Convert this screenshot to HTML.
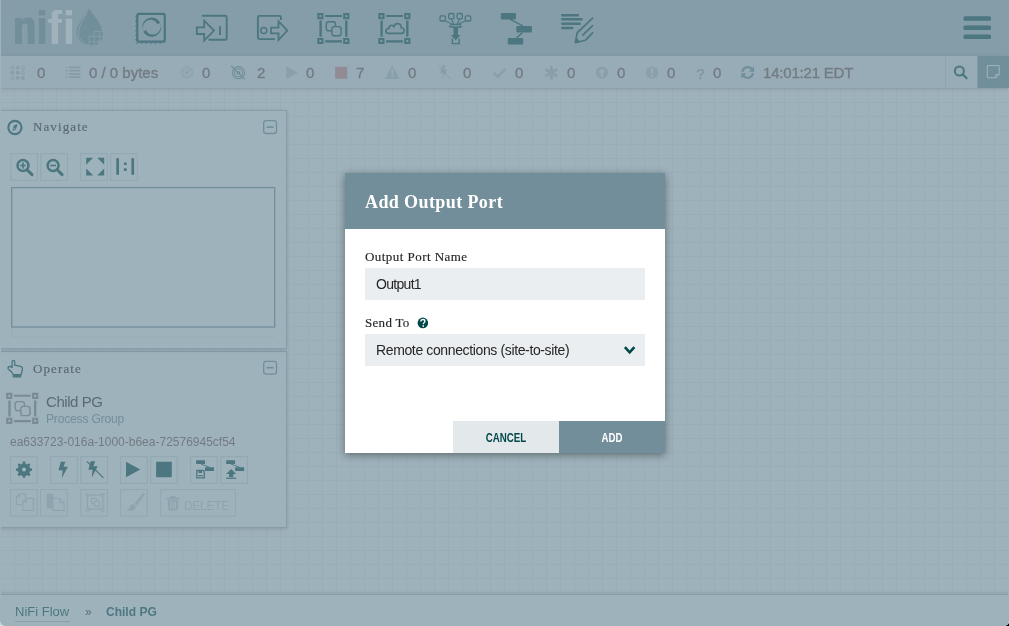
<!DOCTYPE html>
<html><head><meta charset="utf-8">
<style>
*{box-sizing:border-box;margin:0;padding:0}
html,body{width:1009px;height:626px;overflow:hidden;background:linear-gradient(to right,#d6d6d6 50%,#000 50%)}
body{position:relative;font-family:"Liberation Sans",sans-serif}
.abs{position:absolute}
#app{will-change:transform;position:absolute;left:0;top:0;width:1009px;height:626px;overflow:hidden;background-color:#f9fafb;
 background-image:linear-gradient(to right,#e8ecef 1px,transparent 1px),linear-gradient(to bottom,#e8ecef 1px,transparent 1px);
 background-size:14px 14px;background-position:0 4px;border-radius:0 0 5px 5px}
#header{left:0;top:0;width:1009px;height:56px;background:#aabbc3}
#status{left:0;top:56px;width:1009px;height:32px;background:#e3e8eb;box-shadow:0 1px 4px rgba(0,0,0,0.25)}
.st{position:absolute;top:1px;height:32px;line-height:32px;font-size:15px;color:#775351;-webkit-text-stroke:0.35px #775351}
.ico{position:absolute}
.pal{position:absolute;left:-1px;width:288px;background:#f9fafb;border:1px solid #aabbc3;box-shadow:0 1px 4px rgba(0,0,0,0.25)}
.ph{position:absolute;font-family:"Liberation Serif",serif;font-size:13px;letter-spacing:1.1px;color:#262626;-webkit-text-stroke:0.2px #262626}
.btn{position:absolute;width:28px;height:28px;border:1px solid #ccdadb;background:transparent}
#crumbs{left:0;top:594px;width:1009px;height:32px;background:#f9fafb;border-top:1px solid #aabbc3;box-shadow:0 -1px 4px rgba(0,0,0,0.2)}
#glass{left:0;top:0;width:1009px;height:626px;background:rgba(114,142,155,0.67)}
#dialog{left:345px;top:173px;width:320px;height:280px;background:#fff;box-shadow:0 2px 8px rgba(0,0,0,0.4)}
#dh{left:0;top:0;width:320px;height:56px;background:#728e9b}
.lbl{position:absolute;font-family:"Liberation Serif",serif;font-size:13px;color:#262626;white-space:nowrap;-webkit-text-stroke:0.15px #262626}
.inp{position:absolute;left:20px;width:280px;height:32px;background:#eaeef0;font-size:14px;color:#262626;line-height:32px;padding-left:11px;white-space:nowrap}
.dbtn{position:absolute;top:248px;width:106px;height:32px;line-height:34px;text-align:center;font-size:12px;font-weight:700}
.dbtn span{display:inline-block;transform:scaleX(0.81)}
</style></head><body>
<div id="app">
  <div id="header" class="abs">
   <svg width="1009" height="56" style="position:absolute;left:0;top:0">
    <g fill="#728e9b">
     <path d="M15,44 V18 H21.6 V20.8 C23.2,18.8 25.6,17.6 28.4,17.6 C32.4,17.6 34.6,20.2 34.6,24.8 V44 H27.7 V26.6 C27.7,24.5 26.7,23.4 24.9,23.4 C23,23.4 21.9,24.7 21.9,26.8 V44 Z"/>
     <rect x="38.9" y="18" width="6.4" height="26"/>
     <rect x="38.9" y="10" width="6.4" height="5.4"/>
     <path d="M89.4,8.4 C92.5,14.5 102.3,23.5 102.3,32 C102.3,39.6 96.5,44.6 89.4,44.6 C82.3,44.6 76.5,39.6 76.5,32 C76.5,23.5 86.3,14.5 89.4,8.4 Z"/>
    </g>
    <g fill="#ffffff">
     <path d="M51.7,44 V22.8 H48.2 V19.1 H51.7 V15.5 C51.7,12 53.5,10 57,10 H62.1 V14 H59.5 C58.5,14 58.1,14.6 58.1,15.6 V19.1 H62.1 V22.8 H58.1 V44 Z"/>
     <rect x="65.8" y="18.75" width="6.3" height="25.2"/>
     <rect x="65.8" y="10" width="6.3" height="5.4"/>
    </g>
    <path d="M86.8,13.5 C81,22 77.5,30 78.6,35.5 C79.3,38.5 81,40.5 83.5,41.8" fill="none" stroke="#fff" stroke-width="0.9" opacity="0.55"/>
    <g fill="#728e9b">
     <rect x="94.6" y="31.9" width="4.6" height="4.4"/><rect x="100" y="31.9" width="3" height="4.4" rx="0.8"/>
     <rect x="89.6" y="36.8" width="4.6" height="4.8"/><rect x="95" y="36.8" width="4.6" height="4.8"/><rect x="100" y="36.8" width="2.2" height="3.4"/>
     <rect x="89.6" y="42.2" width="4.6" height="3"/><rect x="95" y="42.2" width="3" height="2.4"/>
    </g>
    <g stroke="#aabbc3" stroke-width="0.9" fill="none">
     <path d="M94.2,31.4 H104 M89.2,36.4 H104 M89.2,41.8 H101 M94.2,31.4 V46 M99.6,31.4 V43 M89.2,36.4 V46"/>
    </g>
    <path d="M88.7,43.6 V46 H80 Z" fill="#aabbc3" opacity="0"/>
    <g fill="none" stroke="#004849">
     <!-- processor -->
     <rect x="137.3" y="13.9" width="27.5" height="27.8" rx="1.8" stroke-width="2.2"/>
     <path d="M136,16 V43.3 H164" stroke-width="1.1" stroke-dasharray="1.6 3"/>
     <path d="M142.24,26.37 L142.49,24.87 L142.98,23.43 L143.69,22.09 L144.61,20.87 L145.71,19.82 L146.97,18.96 L148.34,18.31 L149.81,17.89 L151.32,17.71 L152.84,17.77 L154.33,18.07 L155.75,18.61 L157.07,19.36 L158.25,20.32 L159.27,21.46 L160.09,22.74 L157.17,24.29 L156.77,23.35 L156.21,22.47 L155.49,21.67 L154.63,20.98 L153.65,20.43 L152.56,20.04 L151.40,19.82 L150.19,19.80 L148.97,19.98 L147.77,20.36 L146.62,20.94 L145.56,21.72 L144.63,22.68 L143.84,23.80 L143.24,25.06 L142.83,26.42 Z M161.16,28.03 L160.91,29.53 L160.42,30.97 L159.71,32.31 L158.79,33.53 L157.69,34.58 L156.43,35.44 L155.06,36.09 L153.59,36.51 L152.08,36.69 L150.56,36.63 L149.07,36.33 L147.65,35.79 L146.33,35.04 L145.15,34.08 L144.13,32.94 L143.31,31.66 L146.23,30.11 L146.63,31.05 L147.19,31.93 L147.91,32.73 L148.77,33.42 L149.75,33.97 L150.84,34.36 L152.00,34.58 L153.21,34.60 L154.43,34.42 L155.63,34.04 L156.78,33.46 L157.84,32.68 L158.77,31.72 L159.56,30.60 L160.16,29.34 L160.57,27.98 Z" fill="#004849" stroke="none"/>
     <circle cx="151.7" cy="27.2" r="9.1" stroke-width="0.7" opacity="0.35"/>
     <!-- input port -->
     <path d="M202.2,16.4 Q202.5,15.8 203.5,15.8 H225.3 Q226.7,15.8 226.7,17.2 V38.4 Q226.7,39.8 225.3,39.8 H208.5" stroke-width="1.9"/>
     <path d="M196.8,27.4 H204.2 V20.6 L214,30.6 L204.2,40.6 V34 H196.8 Z" stroke-width="1.8" stroke-linejoin="miter"/>
     <path d="M220,26.2 V34.9" stroke-width="1.9"/>
     <!-- output port -->
     <path d="M281,20 V17.4 Q281,15.9 279.5,15.9 H259.4 Q257.9,15.9 257.9,17.4 V37.6 Q257.9,39.1 259.4,39.1 H275" stroke-width="1.9"/>
     <path d="M271.1,27.6 H278.5 V21.2 L287.3,30.6 L278.5,40 V33.4 H271.1 Z" stroke-width="1.8"/>
     <circle cx="263.8" cy="30.5" r="3" stroke-width="1.5"/>
    </g>
    <g fill="#004849">
     <!-- process group frame -->
     <path id="pgf" d="M317.3,13 h6.2 v6.2 h-6.2 Z M343.2,13 h6.2 v6.2 h-6.2 Z M317.3,37.9 h6.2 v6.2 h-6.2 Z M343.2,37.9 h6.2 v6.2 h-6.2 Z M325.1,15 h16.8 v2 h-16.8 Z M325.1,40.3 h16.8 v2.1 h-16.8 Z M319.4,20.6 h2.4 v16.2 h-2.4 Z M345.1,20.6 h2.4 v16.2 h-2.4 Z"/>
     <g fill="#aabbc3"><rect x="319.4" y="15.1" width="2" height="2"/><rect x="345.3" y="15.1" width="2" height="2"/><rect x="319.4" y="40" width="2" height="2"/><rect x="345.3" y="40" width="2" height="2"/></g>
     <path d="M378.3,13 h6.2 v6.2 h-6.2 Z M404.2,13 h6.2 v6.2 h-6.2 Z M378.3,37.9 h6.2 v6.2 h-6.2 Z M404.2,37.9 h6.2 v6.2 h-6.2 Z M386.1,15 h16.8 v2 h-16.8 Z M386.1,40.3 h16.8 v2.1 h-16.8 Z M380.4,20.6 h2.4 v16.2 h-2.4 Z M406.1,20.6 h2.4 v16.2 h-2.4 Z"/>
     <g fill="#aabbc3"><rect x="380.4" y="15.1" width="2" height="2"/><rect x="406.3" y="15.1" width="2" height="2"/><rect x="380.4" y="40" width="2" height="2"/><rect x="406.3" y="40" width="2" height="2"/></g>
     <!-- template -->
     <rect x="500.8" y="13" width="15.2" height="6.6" rx="1"/>
     <rect x="516.3" y="26" width="15.6" height="6.6" rx="1"/>
     <rect x="507.8" y="37.9" width="15.4" height="6.7" rx="1"/>
     <!-- label pencil tip -->
     <path d="M574.6,43.5 L576.2,37.5 L580,41.6 Z"/>
     <!-- hamburger -->
     <rect x="963.5" y="16.3" width="27.5" height="4.5" rx="1.5"/>
     <rect x="963.5" y="25.5" width="27.5" height="4.5" rx="1.5"/>
     <rect x="963.5" y="34.6" width="27.5" height="4.5" rx="1.5"/>
    </g>
    <g fill="none" stroke="#004849">
     <rect x="326.3" y="21.8" width="9.2" height="9" rx="2.4" stroke-width="1.4"/>
     <rect x="331.9" y="26.6" width="9.2" height="9.2" rx="2.4" stroke-width="1.4" fill="#aabbc3"/>
     <path d="M388.5,33.4 H401.5 C403.3,33.4 404.2,32.2 404.2,30.6 C404.2,28.9 402.9,27.6 401.2,27.7 C401.4,25 399.6,23.6 397.6,23.6 C395.6,23.6 394.2,24.8 393.9,26.6 C393.1,25.5 392,25.1 390.9,25.4 C389.3,25.8 388.9,27.1 389.1,28.3 C386.8,28.6 385.7,29.8 385.8,31.1 C385.9,32.6 386.9,33.4 388.5,33.4 Z" stroke-width="1.6"/>
     <!-- funnel -->
     <rect x="440" y="15.8" width="5.4" height="5.2" rx="1.2" stroke-width="1.3"/>
     <rect x="448.7" y="13.5" width="5.2" height="5.3" rx="1.2" stroke-width="1.3"/>
     <rect x="457.1" y="13.5" width="5.2" height="5.3" rx="1.2" stroke-width="1.3"/>
     <rect x="465.3" y="15.8" width="5.4" height="5.2" rx="1.2" stroke-width="1.3"/>
     <path d="M445.5,21 C449,22.5 451,23 452.5,24.5 M451.3,18.8 L453.8,24 M459.6,18.8 L457.2,24 M465.3,21 C462,22.5 460,23 458.5,24.5" stroke-width="1.1"/>
     <path d="M450,24.4 H461 M449,26.2 C452,27.6 459,27.6 462,26.2" stroke-width="1.5"/>
     <path d="M452.4,38.5 V43.6 H459.2 V38.5" stroke-width="1.4"/>
     <!-- template lines -->
     <path d="M509.7,19.2 L522.9,25.9 M522.5,32.6 L516.5,37.9" stroke-width="1.5"/>
     <!-- label lines -->
     <path d="M562.3,15.15 H577.9 M562.3,19.35 H581.5 M562.3,23.7 H579.7 M562.3,28 H572.2" stroke-width="2.5" stroke-linecap="round"/>
     <path d="M575.3,42.8 L577.2,32.8 L593.1,17.6 M585.6,40.2 L593.1,32.3 M582.3,35.6 L593.1,25.2 M575.3,42.8 L585.6,40.2" stroke-width="1.7"/>
    </g>
    <g fill="#004849">
     <path d="M453.5,27 H458 V35 H460.6 L455.75,40.2 L450.8,35 H453.5 Z"/>
    </g>
   </svg>
  </div>
  <div id="status" class="abs">
   <svg width="1009" height="32" style="position:absolute;left:0;top:0" viewBox="0 56 1009 32">
    <g fill="#728e9b" opacity="0.45">
     <circle cx="17.7" cy="67.7" r="1.9"/><circle cx="12.5" cy="72.7" r="1.9"/><circle cx="17.7" cy="72.7" r="1.9"/><circle cx="17.7" cy="77.9" r="1.9"/><circle cx="22.9" cy="77.9" r="1.9"/>
    </g>
    <g fill="none" stroke="#728e9b" stroke-width="1" opacity="0.45">
     <circle cx="12.5" cy="67.7" r="1.6"/><circle cx="22.9" cy="67.7" r="1.6"/><circle cx="22.9" cy="72.7" r="1.6"/><circle cx="12.5" cy="77.9" r="1.6"/>
    </g>
    <g fill="#728e9b" opacity="0.55">
     <rect x="65.6" y="66.6" width="1.8" height="1.6"/><rect x="65.6" y="69.9" width="1.8" height="1.6"/><rect x="65.6" y="73.2" width="1.8" height="1.6"/><rect x="65.6" y="76.4" width="1.8" height="1.6"/>
     <rect x="69.1" y="66.5" width="11.3" height="1.7"/><rect x="69.1" y="69.8" width="11.3" height="1.7"/><rect x="69.1" y="73.1" width="11.3" height="1.7"/><rect x="69.1" y="76.3" width="11.3" height="1.7"/>
    </g>
    <g fill="none" stroke="#728e9b" opacity="0.4" stroke-width="0.9">
     <circle cx="186.7" cy="72.5" r="5.8"/><circle cx="186.7" cy="72.5" r="4"/>
    </g>
    <circle cx="186.7" cy="72.5" r="1.7" fill="#728e9b" opacity="0.4"/>
    <g fill="none" stroke="#728e9b" stroke-width="1.1">
     <circle cx="238.5" cy="72.7" r="6.1"/><circle cx="238.5" cy="72.7" r="4"/>
     <path d="M231.2,66 L244.9,79.4"/>
    </g>
    <circle cx="238.5" cy="72.7" r="1.8" fill="#728e9b"/>
    <path d="M286.2,66.3 L297.6,72.6 L286.2,78.9 Z" fill="#728e9b" opacity="0.4"/>
    <rect x="335.2" y="66.8" width="12" height="12" fill="#d18686"/>
    <path d="M392.35,65.2 L399.8,79 H384.9 Z" fill="#728e9b" opacity="0.4"/>
    <g fill="#e3e8eb"><rect x="391.4" y="69" width="1.9" height="5.2"/><rect x="391.4" y="75.3" width="1.9" height="1.9"/></g>
    <path d="M442.5,65 L445.5,65.2 L444.2,69.2 L447.4,69.6 L442.2,79.8 L443.3,73.5 L440.3,73 Z" fill="#728e9b" opacity="0.4"/>
    <path d="M438.6,65.5 L450.8,79.5" stroke="#728e9b" stroke-width="1.1" opacity="0.4"/>
    <path d="M493.7,72.6 L497.8,76.7 L505.6,68.6" fill="none" stroke="#728e9b" stroke-width="2.6" opacity="0.4"/>
    <g stroke="#728e9b" stroke-width="3" stroke-linecap="round" opacity="0.4">
     <path d="M551.3,67 V78.4 M546.4,69.9 L556.2,75.5 M546.4,75.5 L556.2,69.9"/>
    </g>
    <circle cx="601.9" cy="72.6" r="6.1" fill="#728e9b" opacity="0.4"/>
    <path d="M601.9,68.5 L605.2,72.3 H603.2 V76.5 H600.6 V72.3 H598.6 Z" fill="#e3e8eb"/>
    <circle cx="652" cy="72.6" r="6.1" fill="#728e9b" opacity="0.4"/>
    <g fill="#e3e8eb"><rect x="650.9" y="68.3" width="2.2" height="5.5"/><rect x="650.9" y="74.9" width="2.2" height="2.2"/></g>
    <path d="M742.4,71.8 A5.4,5.4 0 0 1 752.3,69.6 M753,73.2 A5.4,5.4 0 0 1 743.1,75.4" fill="none" stroke="#728e9b" stroke-width="2.2"/>
    <path d="M754.1,66.6 V71.8 H748.9 Z M741.3,78.5 V73.3 H746.5 Z" fill="#728e9b"/>
    <rect x="945" y="56" width="1" height="32" fill="#c7d2d7"/>
    <circle cx="959.4" cy="71" r="4.5" fill="none" stroke="#004849" stroke-width="2"/>
    <path d="M962.6,74.3 L966.6,78.3" stroke="#004849" stroke-width="2.2" stroke-linecap="round"/>
    <rect x="977.4" y="56" width="31.6" height="32" fill="#728e9b"/>
    <path d="M987.3,65.6 H999.2 V74.5 L995.8,77.8 H987.3 Z M999.2,74.5 H995.8 V77.8" fill="none" stroke="#fff" stroke-width="1" stroke-linejoin="round"/>
   </svg>
   <div class="st" style="left:37px">0</div>
   <div class="st" style="left:89px">0 / 0 bytes</div>
   <div class="st" style="left:202px">0</div>
   <div class="st" style="left:257px">2</div>
   <div class="st" style="left:306px">0</div>
   <div class="st" style="left:356px">7</div>
   <div class="st" style="left:408px">0</div>
   <div class="st" style="left:463px">0</div>
   <div class="st" style="left:515px">0</div>
   <div class="st" style="left:567px">0</div>
   <div class="st" style="left:617px">0</div>
   <div class="st" style="left:667px">0</div>
   <div class="st" style="left:696px;top:2px;color:#728e9b;-webkit-text-stroke:0.3px #728e9b;opacity:0.6;font-weight:700">?</div>
   <div class="st" style="left:713px">0</div>
   <div class="st" style="left:763px;letter-spacing:-0.2px">14:01:21 EDT</div>
  </div>
  <div class="pal" style="top:351px;height:177px"></div>
  <div class="pal" style="top:110px;height:239px"></div>
  <svg width="290" height="530" style="position:absolute;left:0;top:0">
   <!-- navigate header -->
   <circle cx="14.9" cy="127.5" r="6.6" fill="none" stroke="#004849" stroke-width="2.1"/>
   <path d="M17.6,123.9 L15.9,129.6 L12.3,131.1 L13.9,125.5 Z" fill="#004849"/>
   <path d="M13.8,127.6 L15.6,128.4 L13.6,129.6 Z" fill="#f9fafb" opacity="0.8"/>
   <rect x="263.7" y="120.7" width="12.8" height="12.8" rx="2.4" fill="none" stroke="#728e9b" stroke-width="1.3"/>
   <rect x="266.6" y="126.3" width="7" height="1.6" fill="#728e9b"/>
   <!-- nav buttons -->
   <g fill="none" stroke="#ccdadb" stroke-width="1">
    <rect x="10.9" y="153.7" width="26.6" height="26.6"/>
    <rect x="40.8" y="153.7" width="26.6" height="26.6"/>
    <rect x="80.7" y="153.7" width="26.6" height="26.6"/>
    <rect x="110.7" y="153.7" width="26.6" height="26.6"/>
   </g>
   <g fill="none" stroke="#004849">
    <circle cx="23" cy="165.5" r="5.5" stroke-width="2.5"/>
    <path d="M27,169.7 L32,174.6" stroke-width="3" stroke-linecap="round"/>
    <path d="M23,162.6 V168.4 M20.1,165.5 H25.9" stroke-width="1.6"/>
    <circle cx="53.1" cy="165.5" r="5.5" stroke-width="2.5"/>
    <path d="M57.1,169.7 L62.1,174.6" stroke-width="3" stroke-linecap="round"/>
    <path d="M50.2,165.5 H56" stroke-width="1.6"/>
   </g>
   <g fill="#004849">
    <path d="M86.2,157.8 H93.2 L86.2,164.8 Z M104.2,157.8 V164.8 L97.2,157.8 Z M86.2,175.5 V168.5 L93.2,175.5 Z M104.2,175.5 H97.2 L104.2,168.5 Z"/>
    <rect x="116.3" y="158.1" width="2.7" height="17" rx="1.1"/>
    <rect x="131.4" y="158.1" width="2.7" height="17" rx="1.1"/>
    <rect x="123.9" y="162.4" width="2.8" height="2.7" rx="0.6"/>
    <rect x="123.9" y="168.3" width="2.8" height="2.7" rx="0.6"/>
   </g>
   <rect x="11.7" y="187.6" width="263" height="139.4" fill="none" stroke="#728e9b" stroke-width="1.3"/>
   <path d="M11.7,328 V337 H275" fill="none" stroke="#e3e8eb" stroke-width="1"/>
   <!-- operate header -->
   <path d="M13.3,374.6 C12.5,372.4 10.8,370.8 8.9,369.6 C7.4,368.6 7.7,366.7 9.6,366.5 C10.5,366.4 11.4,366.9 12.1,367.5 V361.6 C12.1,359.9 14.7,359.9 14.7,361.6 V365.2 L20.6,366.3 C21.9,366.6 22.6,367.5 22.4,369.1 L21.3,374.6 Z" fill="none" stroke="#004849" stroke-width="1.3" stroke-linejoin="round"/>
   <rect x="12.6" y="374.4" width="8.6" height="3" rx="0.5" fill="#004849"/>
   <rect x="263.7" y="361.3" width="12.8" height="12.8" rx="2.4" fill="none" stroke="#728e9b" stroke-width="1.3"/>
   <rect x="266.6" y="366.9" width="7" height="1.6" fill="#728e9b"/>
   <!-- operate PG icon -->
   <g transform="translate(-311.1,379.8)" fill="#8a8a8a">
    <path d="M317.3,13 h6.2 v6.2 h-6.2 Z M343.2,13 h6.2 v6.2 h-6.2 Z M317.3,37.9 h6.2 v6.2 h-6.2 Z M343.2,37.9 h6.2 v6.2 h-6.2 Z M325.1,15 h16.8 v2 h-16.8 Z M325.1,40.3 h16.8 v2.1 h-16.8 Z M319.4,20.6 h2.4 v16.2 h-2.4 Z M345.1,20.6 h2.4 v16.2 h-2.4 Z"/>
    <g fill="#f9fafb"><rect x="319.4" y="15.1" width="2" height="2"/><rect x="345.3" y="15.1" width="2" height="2"/><rect x="319.4" y="40" width="2" height="2"/><rect x="345.3" y="40" width="2" height="2"/></g>
    <g fill="none" stroke="#8a8a8a"><rect x="326.3" y="21.8" width="9.2" height="9" rx="2.4" stroke-width="1.4"/><rect x="331.9" y="26.6" width="9.2" height="9.2" rx="2.4" stroke-width="1.4" fill="#f9fafb"/></g>
   </g>
   <!-- operate buttons -->
   <g fill="none" stroke="#ccdadb" stroke-width="1">
    <rect x="10.6" y="456.7" width="26.6" height="26.6"/>
    <rect x="50.7" y="456.7" width="26.6" height="26.6"/>
    <rect x="80.8" y="456.7" width="26.6" height="26.6"/>
    <rect x="120.6" y="456.7" width="26.6" height="26.6"/>
    <rect x="150.6" y="456.7" width="26.6" height="26.6"/>
    <rect x="190.7" y="456.7" width="26.6" height="26.6"/>
    <rect x="220.8" y="456.7" width="26.6" height="26.6"/>
    <rect x="10.6" y="489.6" width="26.6" height="26.6"/>
    <rect x="40.6" y="489.6" width="26.6" height="26.6"/>
    <rect x="80.8" y="489.6" width="26.6" height="26.6"/>
    <rect x="120.6" y="489.6" width="26.6" height="26.6"/>
    <rect x="160.7" y="489.6" width="74.6" height="26.6"/>
   </g>
   <g fill="#004849">
    <path id="gear" d="M22.9,461.6 h2.2 l0.4,2.1 a6,6 0 0 1 1.6,0.7 l1.8,-1.2 l1.6,1.6 l-1.2,1.8 a6,6 0 0 1 0.7,1.6 l2.1,0.4 v2.2 l-2.1,0.4 a6,6 0 0 1 -0.7,1.6 l1.2,1.8 l-1.6,1.6 l-1.8,-1.2 a6,6 0 0 1 -1.6,0.7 l-0.4,2.1 h-2.2 l-0.4,-2.1 a6,6 0 0 1 -1.6,-0.7 l-1.8,1.2 l-1.6,-1.6 l1.2,-1.8 a6,6 0 0 1 -0.7,-1.6 l-2.1,-0.4 v-2.2 l2.1,-0.4 a6,6 0 0 1 0.7,-1.6 l-1.2,-1.8 l1.6,-1.6 l1.8,1.2 a6,6 0 0 1 1.6,-0.7 Z M24,467.4 a2.1,2.1 0 1 0 0.01,0 Z" fill-rule="evenodd"/>
    <path d="M60.8,461.7 H65.3 L63.5,466.8 H67.8 L61.8,478.2 L62.7,470.2 H58.5 Z"/>
    <path d="M90.7,461.2 H95.2 L93.4,466.3 H97.7 L91.7,477.7 L92.6,469.7 H88.4 Z"/>
    <path d="M126,461.7 L140.3,469.45 L126,477.2 Z"/>
    <rect x="156.1" y="461.7" width="15.7" height="15.5" rx="0.8"/>
    <rect x="196.1" y="460.2" width="8.9" height="3.8" rx="0.5"/><rect x="205" y="467.3" width="9" height="3.7" rx="0.5"/>
    <rect x="226.2" y="460.2" width="8.9" height="3.8" rx="0.5"/><rect x="235.1" y="467.3" width="9.1" height="3.7" rx="0.5"/>
    <path d="M231.2,468.9 L236.2,474 H233.3 V477 H229.1 V474 H226.2 Z"/>
    <rect x="226.2" y="477.6" width="10" height="1.3"/>
   </g>
   <g fill="none" stroke="#004849">
    <path d="M86.9,461.4 L103.4,477.9" stroke-width="1.3"/>
    <path d="M201,464 L209.5,467.3 M231,464 L239.5,467.3" stroke-width="0.9"/>
    <path d="M196.8,470.4 H203.2 L204.3,471.5 V477.9 H196.8 Z" stroke-width="1.3"/>
   </g>
   <g fill="#004849"><rect x="198.5" y="470.4" width="3.6" height="2.6"/><rect x="198.2" y="475" width="4.6" height="1.2"/></g>
   <!-- disabled row -->
   <g opacity="0.38">
    <g fill="none" stroke="#728e9b" stroke-width="1.1" stroke-linejoin="round">
     <path d="M19.5,493.9 H25.5 V498.5 M16.4,504.8 V497 L19.5,493.9 V497 H16.4 M16.4,504.8 H22.8"/>
     <path d="M26.3,498.4 H33.5 V510.4 H22.8 V501.9 Z M22.8,501.9 H26.3 V498.4"/>
     <path d="M52.8,498.3 H59.6 L64.1,502.8 V510.4 H52.8 Z M59.6,498.3 V502.8 H64.1"/>
     <path d="M89.3,495.2 H101 M89.3,509.2 H101 M87.4,497.5 V507.2 M103,497.5 V507.2" stroke-width="1.2"/>
     <rect x="86.4" y="493.7" width="2.6" height="2.6"/><rect x="101.3" y="493.7" width="2.6" height="2.6"/><rect x="86.4" y="508.1" width="2.6" height="2.6"/><rect x="101.3" y="508.1" width="2.6" height="2.6"/>
     <rect x="91.5" y="498.5" width="5.2" height="5.2" rx="1.2"/><rect x="94.3" y="501.2" width="5.2" height="5.2" rx="1.2" fill="#f9fafb"/>
    </g>
    <g fill="#728e9b">
     <path d="M46.7,493.7 H53.4 V508.3 H46.7 Z"/>
     <path d="M142.8,493.6 C144,492.8 145,494 144.3,495.2 L136.6,505.5 L134.6,503.6 Z M133.9,504.4 L135.8,506.3 C135.8,509.5 132.5,511.6 126.1,510.9 C128.9,509.8 129.3,508.3 130,506.5 C130.6,504.9 132.4,504 133.9,504.4 Z"/>
     <path d="M166.5,497.8 H179.7 V499.4 H166.5 Z M170.4,496 H175.8 V497.8 H170.4 Z M167.7,500.2 H178.5 L177.7,510.6 H168.5 Z"/>
    </g>
    <g fill="#f9fafb"><rect x="170.2" y="501.8" width="1.2" height="7.2"/><rect x="172.5" y="501.8" width="1.2" height="7.2"/><rect x="174.8" y="501.8" width="1.2" height="7.2"/></g>
   </g>
  </svg>
  <div class="ph" style="left:33px;top:119px">Navigate</div>
  <div class="ph" style="left:33px;top:361px">Operate</div>
  <div class="abs" style="left:46px;top:393px;font-size:15px;color:#262626;letter-spacing:-0.45px;white-space:nowrap">Child PG</div>
  <div class="abs" style="left:46px;top:412px;font-size:12px;color:#728e9b;letter-spacing:-0.15px;white-space:nowrap">Process Group</div>
  <div class="abs" style="left:10px;top:435px;font-size:12px;color:#775351;white-space:nowrap">ea633723-016a-1000-b6ea-72576945cf54</div>
  <div class="abs" style="left:184px;top:499px;font-size:12px;letter-spacing:-0.3px;color:#728e9b;opacity:0.38;white-space:nowrap">DELETE</div>
  <div id="crumbs" class="abs">
   <div class="abs" style="left:15px;top:9px;font-size:13px;color:#004849;white-space:nowrap">NiFi Flow</div>
   <div class="abs" style="left:15px;top:26px;width:55px;height:1px;background:#728e9b;opacity:0.5"></div>
   <div class="abs" style="left:85px;top:10px;font-size:12px;color:#262626;white-space:nowrap">&raquo;</div>
   <div class="abs" style="left:106px;top:9px;font-size:13px;font-weight:700;color:#004849;white-space:nowrap;transform:scaleX(0.925);transform-origin:0 0">Child PG</div>
  </div>
  <div class="abs" style="left:0;top:0;width:1px;height:626px;background:#fff"></div>
  <div class="abs" style="left:1008px;top:88px;width:1px;height:538px;background:#fff"></div>
  <div id="glass" class="abs"></div>
  <div id="dialog" class="abs">
    <div id="dh" class="abs"></div>
    <div class="abs" style="left:20px;top:1px;height:56px;line-height:56px;font-family:'Liberation Serif',serif;font-weight:700;font-size:18px;letter-spacing:0.4px;color:#fff">Add Output Port</div>
    <div class="lbl" style="left:20px;top:76px;letter-spacing:0.45px">Output Port Name</div>
    <div class="inp" style="top:95px;letter-spacing:-0.7px">Output1</div>
    <div class="lbl" style="left:20px;top:142px;letter-spacing:0.3px">Send To</div>
    <div class="inp" style="top:161px;letter-spacing:-0.37px">Remote connections (site-to-site)</div>
    <svg width="320" height="280" style="position:absolute;left:0;top:0" viewBox="345 173 320 280">
     <circle cx="422.85" cy="322.9" r="5.3" fill="#004849"/>
     <path d="M420.9,321.4 C420.9,320.1 421.8,319.5 422.9,319.5 C424.1,319.5 424.9,320.2 424.9,321.2 C424.9,322.5 423.4,322.7 423.4,323.9 V324.3" fill="none" stroke="#fff" stroke-width="1.3"/>
     <rect x="422.5" y="325.3" width="1.5" height="1.5" fill="#fff"/>
     <path d="M624.9,347.2 L629.65,352.3 L634.4,347.2" fill="none" stroke="#004849" stroke-width="2.6"/>
    </svg>
    <div class="dbtn" style="left:108px;background:#e3e8eb;color:#004849"><span>CANCEL</span></div>
    <div class="dbtn" style="left:214px;background:#728e9b;color:#fff"><span>ADD</span></div>
  </div>
</div>
</body></html>
